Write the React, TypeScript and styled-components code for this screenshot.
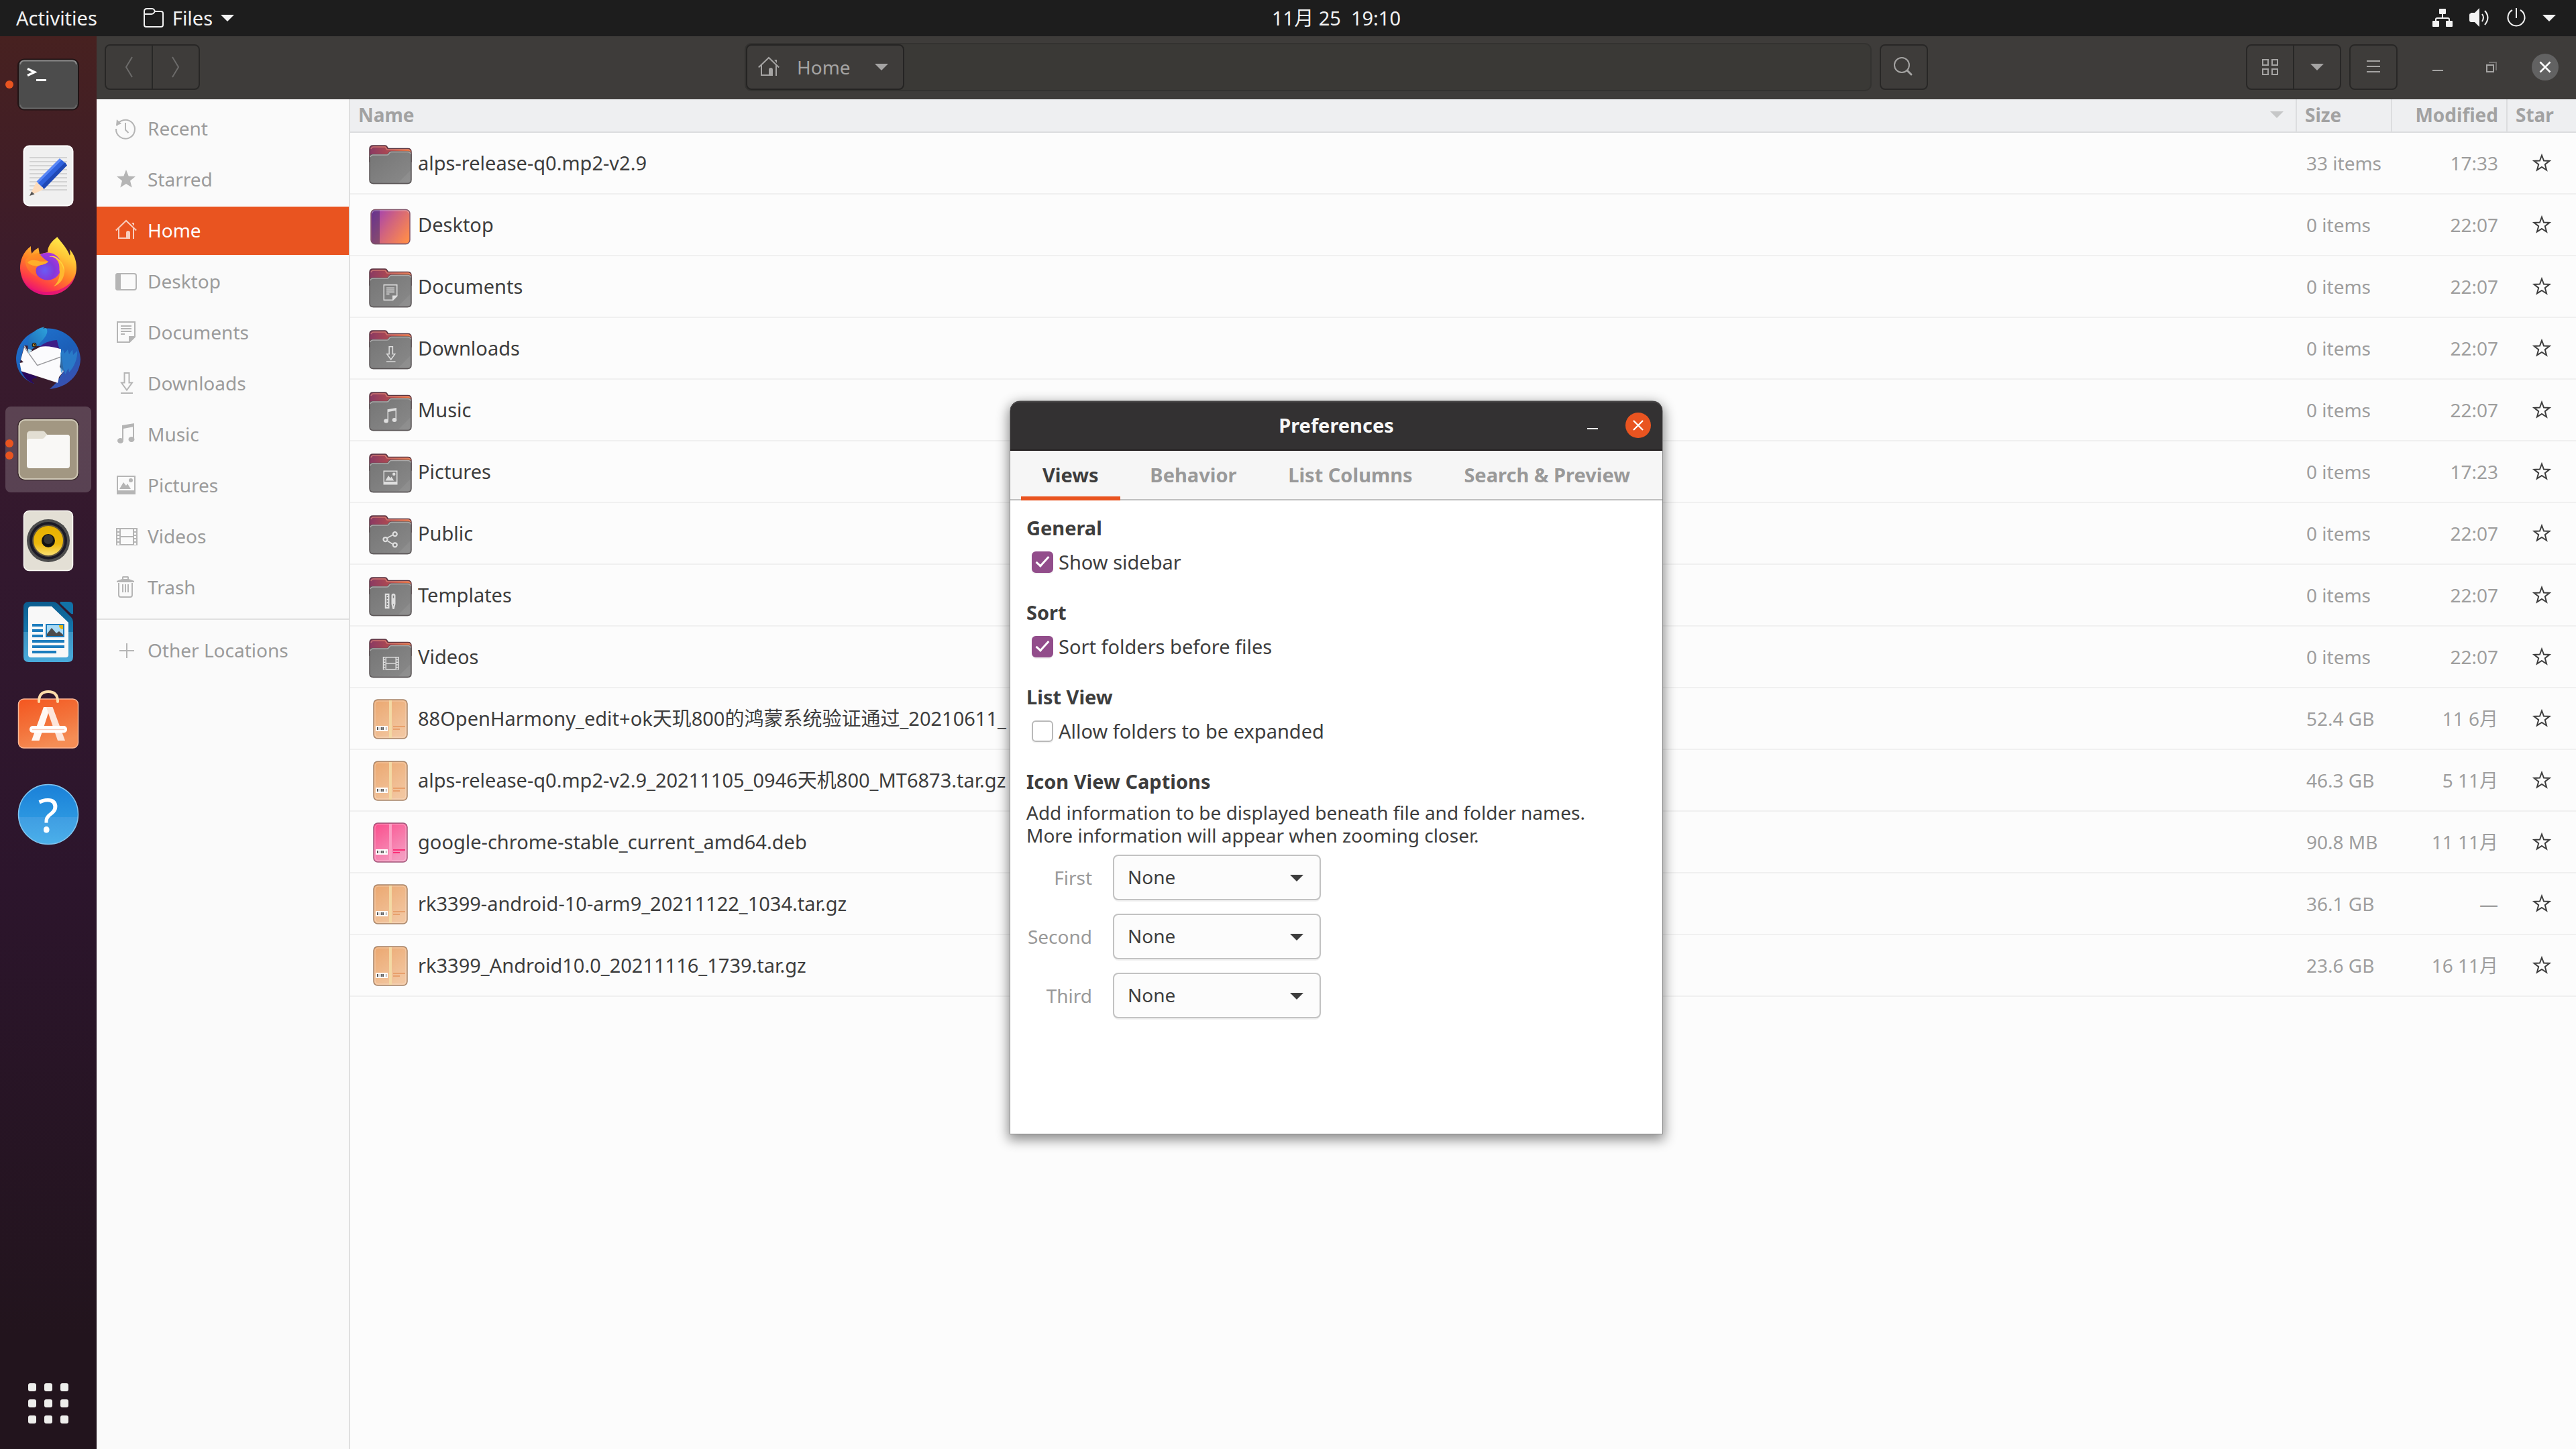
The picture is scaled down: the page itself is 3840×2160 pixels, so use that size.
import React, { useState } from 'react';
import styled, { createGlobalStyle, css } from 'styled-components';

const sans = '"Noto Sans", "Noto Sans CJK SC", sans-serif';

const GlobalStyle = createGlobalStyle`
  *, *::before, *::after { box-sizing: border-box; }
  html, body, #root { height: 100%; }
  body {
    margin: 0;
    overflow: hidden;
    background: #22141d;
    color: #3d3d3d;
    font-family: ${sans};
    font-size: 28px;
    line-height: 36px;
  }
  button, select, input { font: inherit; color: inherit; margin: 0; padding: 0; }
  button { background: none; border: 0; display: inline-flex; align-items: center; }
  svg { display: block; flex: none; overflow: visible; }
`;

/* ---------- symbolic icons, drawn on a 32 unit grid ---------- */

const glyphs: Record<string, React.ReactNode> = {
  recent: (
    <>
      <path d="M2 12.5A14 14 0 1 1 1 17" fill="none" stroke="currentColor" strokeWidth="2" />
      <path d="M2 3l7 6.5-8 2.5z" fill="currentColor" />
      <path d="M15 8v10.500l4.500 4.500" fill="none" stroke="currentColor" strokeWidth="2" />
    </>
  ),
  star: <path d="M16 2l3.700 9.500 10.300.5-8 6.500 2.700 10L16 23l-8.700 5.500 2.700-10-8-6.500 10.300-.5z" fill="currentColor" />,
  starOutline: (
    <path d="M16 4.500l3 8 8.500.4-6.700 5.300 2.300 8.300L16 22l-7.100 4.500 2.300-8.300-6.700-5.300 8.500-.4z" fill="none" stroke="currentColor" strokeWidth="2" />
  ),
  home: (
    <>
      <path d="M.8 16.500L16 2l15.200 14.500M5 13v15h15M27 13v16" fill="none" stroke="currentColor" strokeWidth="2" />
      <path d="M16 29V20q0-3 3-3t3 3v9zM24 5h4v5z" fill="currentColor" />
    </>
  ),
  desktop: (
    <>
      <rect x="1" y="5" width="30" height="24" rx="3" fill="none" stroke="currentColor" strokeWidth="2" />
      <path d="M4 4h4v26H4q-4 0-4-4V8q0-4 4-4z" fill="currentColor" />
    </>
  ),
  documents: (
    <>
      <path d="M3 1h26v22l-8 8H3z" fill="none" stroke="currentColor" strokeWidth="2" />
      <path d="M20 22h10L20 32zM8 6h16v2H8zM8 10h16v2H8zM8 14h16v2H8zM8 18h6v2H8z" fill="currentColor" />
    </>
  ),
  downloads: (
    <path d="M13.500 1h7v14.500h4.500L17 26.500 9 15.500h4.500zM8 31h18" fill="none" stroke="currentColor" strokeWidth="2" />
  ),
  music: (
    <>
      <path d="M10 3l18-3v5L12 8v17h-2zM26 4h2v20h-2z" fill="currentColor" />
      <ellipse cx="7.500" cy="26" rx="4.500" ry="4" fill="currentColor" />
      <ellipse cx="24" cy="24" rx="4.500" ry="4" fill="currentColor" />
    </>
  ),
  pictures: (
    <>
      <path d="M2 2h28v28H2zM4 4v20h24V4z" fill="currentColor" fillRule="evenodd" />
      <path d="M6 22l6-10 4 5 2-3 5 8z" fill="currentColor" />
      <circle cx="23" cy="9" r="3" fill="currentColor" />
    </>
  ),
  videos: (
    <>
      <path d="M7 5h20v24H7zM7 17h20" fill="none" stroke="currentColor" strokeWidth="2" />
      <path d="M2 4v26M32 4v26" fill="none" stroke="currentColor" strokeWidth="2" />
      <path d="M4 4v26M30 4v26" fill="none" stroke="currentColor" strokeWidth="4" strokeDasharray="2 3" />
    </>
  ),
  trash: (
    <>
      <path d="M5 10v18q0 3 3 3h14q3 0 3-3V10" fill="none" stroke="currentColor" strokeWidth="2" />
      <path d="M2 8V7l8-3V1.500Q10 0 11.500 0h7Q20 0 20 1.500V4l8 3v2H2zM12 4h6V2h-6zM10 12h2v12h-2zM14 12h2v12h-2zM18 12h2v12h-2z" fill="currentColor" fillRule="evenodd" />
    </>
  ),
  plus: <path d="M6 17h22M17 6v22" fill="none" stroke="currentColor" strokeWidth="2" />,
  share: (
    <>
      <path d="M10 13l13-7M10 19l13 8" fill="none" stroke="currentColor" strokeWidth="2.500" />
      <g fill="#7f7f7f" stroke="currentColor" strokeWidth="3">
        <circle cx="6" cy="16" r="4" />
        <circle cx="25" cy="5.500" r="4" />
        <circle cx="25" cy="27" r="4" />
      </g>
    </>
  ),
  templates: (
    <>
      <path d="M5 1h9v30H5zM8 4v24h3v-2H9v-2h2v-4H9v-2h2v-4H9v-2h2V8H9V6h2V4z" fill="currentColor" fillRule="evenodd" />
      <path d="M18 5q0-4 4-4t4 4v17l-2.500 10h-3L18 22zM21 5v5h2V5zM21 22l1 4 1-4z" fill="currentColor" fillRule="evenodd" />
    </>
  ),
  folder: (
    <path d="M2 10V6q0-4 4-4h8q2 0 3 2l1 2h9q3 0 3 3v17q0 3-3 3H5q-3 0-3-3V10h11q2 0 3.500-2L18 6" fill="none" stroke="currentColor" strokeWidth="2" />
  ),
  search: (
    <>
      <circle cx="13" cy="13" r="11" fill="none" stroke="currentColor" strokeWidth="2" />
      <path d="M21 21l6 6" stroke="currentColor" strokeWidth="3" strokeLinecap="round" />
    </>
  ),
  grid: <path d="M5 5h8v8H5zM19 5h8v8h-8zM5 19h8v8H5zM19 19h8v8h-8z" fill="none" stroke="currentColor" strokeWidth="2" />,
  menu: <path d="M6 7h20M6 15h20M6 23h20" stroke="currentColor" strokeWidth="2" />,
  back: <path d="M21 1L12 16l9 15" fill="none" stroke="currentColor" strokeWidth="2" />,
  forward: <path d="M11 1l9 15-9 15" fill="none" stroke="currentColor" strokeWidth="2" />,
  minimize: <path d="M8 21h16" stroke="currentColor" strokeWidth="2" />,
  restore: (
    <>
      <path d="M9 13h10v10H9z" fill="none" stroke="currentColor" strokeWidth="2" />
      <path d="M12 9h11v12" fill="none" stroke="currentColor" strokeWidth="2" opacity=".5" />
    </>
  ),
  close: <path d="M8.500 8.500l15 15M23.500 8.500l-15 15" stroke="currentColor" strokeWidth="2.500" />,
  network: (
    <>
      <path d="M12 2h8q1 0 1 1v6q0 1-1 1h-8q-1 0-1-1V3q0-1 1-1zM2 20h8q1 0 1 1v7q0 1-1 1H2q-1 0-1-1v-7q0-1 1-1zM22 20h8q1 0 1 1v7q0 1-1 1h-8q-1 0-1-1v-7q0-1 1-1z" fill="currentColor" />
      <path d="M16 9v7M6 21v-3q0-2 2-2h16q2 0 2 2v3" fill="none" stroke="currentColor" strokeWidth="2" />
    </>
  ),
  volume: (
    <>
      <path d="M3 9q0-1 1-1h5l7-7v28l-7-7H4q-3 0-3-3v-8q0-2 2-2z" fill="currentColor" />
      <path d="M20 10q4 5 0 11M24 5q9 10 0 21" fill="none" stroke="currentColor" strokeWidth="2" />
    </>
  ),
  power: <path d="M16 1v15M10 4a12.500 12.500 0 1 0 12 0" fill="none" stroke="currentColor" strokeWidth="2" />,
};

const Glyph = ({ name, size = 32 }: { name: string; size?: number }) => (
  <svg width={size} height={size} viewBox="0 0 32 32" aria-hidden="true">
    {glyphs[name]}
  </svg>
);

const Caret = () => (
  <svg width="20" height="10" viewBox="0 0 20 10" aria-hidden="true">
    <path d="M0 0h20L10 10z" fill="currentColor" />
  </svg>
);

/* ---------- full colour file icons, 64 unit grid ---------- */

const FolderIcon = ({ emblem }: { emblem?: string }) => (
  <svg width="64" height="64" viewBox="0 0 64 64" aria-hidden="true">
    <defs>
      <linearGradient id="folder-back" x1="0" x2="1">
        <stop offset="0" stopColor="#8a3a63" />
        <stop offset=".5" stopColor="#b04a50" />
        <stop offset="1" stopColor="#f0783c" />
      </linearGradient>
      <linearGradient id="folder-front" x1="0" y1="0" x2="1" y2="1">
        <stop offset="0" stopColor="#757575" />
        <stop offset="1" stopColor="#8a8a8a" />
      </linearGradient>
    </defs>
    <rect x="1" y="14" width="62" height="50" rx="6" fill="#000" opacity=".15" />
    <path d="M1 30V11q0-5 5-5h18q2 0 3 2l1.500 2.500H58q5 0 5 5V30z" fill="url(#folder-back)" stroke="#5a3540" strokeWidth="1.500" />
    <path d="M3 11q1-3 4-3h17l3 4h31q3 0 4 3" fill="none" stroke="#e08a78" strokeWidth="1.500" opacity=".7" />
    <path d="M1 24q0-4.500 4.500-4.500H26q2 0 3-1.500l1-1.500q1-1.500 3-1.500h25q5 0 5 5v37q0 5.500-5.500 5.500H6.500Q1 62.500 1 57z" fill="url(#folder-front)" stroke="#5b5657" strokeWidth="1.500" />
    <path d="M2 23q1-3 4-3h20.500q2 0 3-1.500l1-1.500q1-1.500 3-1.500H58q3.500 0 4 3" fill="none" stroke="#aaaaaa" strokeWidth="1.500" />
    <path d="M62 43L44 61h13q5 0 5-5z" fill="#fff" opacity=".06" />
    {emblem && (
      <svg x="20" y="29" width="24" height="24" viewBox="0 0 32 32" color="#dedede">
        {glyphs[emblem]}
      </svg>
    )}
  </svg>
);

const DesktopIcon = () => (
  <svg width="64" height="64" viewBox="0 0 64 64" aria-hidden="true">
    <defs>
      <linearGradient id="desk" x1="0" y1=".2" x2="1" y2=".8">
        <stop offset="0" stopColor="#a03fb4" />
        <stop offset=".45" stopColor="#d0637f" />
        <stop offset="1" stopColor="#ff8c4a" />
      </linearGradient>
    </defs>
    <rect x="3" y="11" width="58" height="51" rx="6" fill="#000" opacity=".15" />
    <rect x="3" y="9.500" width="58" height="51" rx="6" fill="url(#desk)" stroke="#84566b" strokeWidth="1.500" />
    <path d="M9 10h7v50H9q-5 0-5-5V15q0-5 5-5z" fill="#2b2b5e" opacity=".45" />
    <path d="M5 15q0-4 4-4h46q4 0 4 4" fill="none" stroke="#fff" strokeWidth="1.500" opacity=".3" />
  </svg>
);

const PackageIcon = ({ pink = false }: { pink?: boolean }) => {
  const id = pink ? 'pack-pink' : 'pack-tan';
  return (
    <svg width="64" height="64" viewBox="0 0 64 64" aria-hidden="true">
      <defs>
        <linearGradient id={id} x1="0" y1="0" x2=".6" y2="1">
          <stop offset="0" stopColor={pink ? '#fb4c8b' : '#eba76f'} />
          <stop offset="1" stopColor={pink ? '#f49ac0' : '#f2c6a0'} />
        </linearGradient>
      </defs>
      <rect x="7" y="4" width="50" height="58" rx="6" fill={`url(#${id})`} stroke={pink ? '#a0577a' : '#a5846a'} strokeWidth="1.500" />
      <rect x="9" y="6" width="46" height="54" rx="5" fill="none" stroke="#fff" strokeWidth="1" opacity=".35" />
      <rect x="30" y="5" width="4" height="56" fill={pink ? '#fba0c4' : '#f3d9a4'} />
      <rect x="10" y="43" width="18" height="8" fill="#fff" />
      <path d="M12 45h2v4h-2zM16 45h1v4h-1zM18 45h1v4h-1zM20 45h2v4h-2zM25 45h1v4h-1z" fill="#555" />
      <path d="M36 43h18v2H36zM36 47h10v2H36z" fill={pink ? '#fb2f77' : '#e8a06c'} />
    </svg>
  );
};

/* ---------- launcher icons, 96 unit grid ---------- */

const App96 = ({ children }: { children: React.ReactNode }) => (
  <svg width="96" height="96" viewBox="0 0 96 96" aria-hidden="true">
    {children}
  </svg>
);

const TerminalArt = () => (
  <App96>
    <rect x="3" y="10.500" width="90" height="75" rx="9" fill="#4c4c4c" stroke="#201314" strokeWidth="2" />
    <path d="M6 18q1-5.500 6-5.500h72q5 0 6 5.500" fill="none" stroke="#8a8a8a" strokeWidth="2" />
    <path d="M6 78q1 5.500 6 5.500h72q5 0 6-5.500" fill="none" stroke="#686868" strokeWidth="2" />
    <path d="M17 24.500l10.500 5L17 34.500" fill="none" stroke="#fff" strokeWidth="3.500" />
    <path d="M30 41.500h15" stroke="#fff" strokeWidth="3" />
  </App96>
);

const EditorArt = () => (
  <App96>
    <rect x="11.500" y="3.500" width="73" height="89" rx="8" fill="#f0f0f0" stroke="#fff" strokeWidth="2" />
    <path d="M20 21h56M20 27h56M20 33h56M20 39h56M20 45h56M20 51h56M20 57h56M20 63h56M20 69h56" stroke="#d3d3d3" strokeWidth="2" />
    <path d="M20 78l10.500-21.500L41.500 68z" fill="#fddcbc" />
    <path d="M20 78l3.200-6.500 4.300 4z" fill="#555" />
    <path d="M30.500 56.500L65 22l5.500 5L36 62z" fill="#5a88f7" />
    <path d="M33 59l35-34.500 5.500 5L39 65z" fill="#2f62de" />
    <path d="M38 63l35-35 3 4.500L41.500 68z" fill="#1f48b5" />
  </App96>
);

const FirefoxArt = () => (
  <App96>
    <defs>
      <linearGradient id="fx-body" x1=".8" y1="0" x2=".3" y2="1">
        <stop offset="0" stopColor="#fff44f" />
        <stop offset=".3" stopColor="#ffc235" />
        <stop offset=".55" stopColor="#ff8426" />
        <stop offset=".8" stopColor="#ff3f45" />
        <stop offset="1" stopColor="#e5097f" />
      </linearGradient>
      <radialGradient id="fx-globe" cx=".4" cy=".65" r=".7">
        <stop offset="0" stopColor="#6a5cf5" />
        <stop offset=".5" stopColor="#8438d8" />
        <stop offset="1" stopColor="#b335e0" />
      </radialGradient>
      <linearGradient id="fx-head" x1="0" y1="0" x2=".2" y2="1">
        <stop offset="0" stopColor="#ff9a1f" />
        <stop offset="1" stopColor="#ff5f35" />
      </linearGradient>
    </defs>
    <path d="M22 17C10 26 6 38 6 50c1 24 20 40 42 40 24 0 42-19 42-41 0-11-4-21-10.500-27.500C81 26 81 29 80 31 76 20 68 12 61.300 3.300 54 9 47 16 47 26L35 29l-1.700-9.700C29 22 25.500 24.500 23.500 28 22 25 22 21 22 17z" fill="url(#fx-body)" />
    <path d="M7 58c4 18 20 28 40 27 20 0 38-12 42-28-3 19-20 33-41 33C27 90 10 77 7 58z" fill="#e0107a" opacity=".8" />
    <circle cx="47" cy="47" r="20.500" fill="url(#fx-globe)" />
    <path d="M57 34c10 2 15 10 15 20s-6 20-16 23c8-7 10-17 8.500-25C65 44 63 38 57 34z" fill="#ffb730" />
    <path d="M57 34c-4-2-6-1-8-1 4-2 10-2 14 3 6 5 10 12 9 22-1-10-6-20-15-24z" fill="#ffd43c" />
    <path d="M33 27c5 5 10 11 15 12.500-4 5-11 5-15 7-5 3-4 9-1 16C20 58 13 48 14 38c3-5 11-9 19-11z" fill="url(#fx-head)" />
    <path d="M17 41c5-5 13-3 18-1.500 5 1 9-1 13 .5-4 5-11 4-16 7-5-1-11-1-15-6z" fill="#ffae2b" />
  </App96>
);

const ThunderbirdArt = () => (
  <App96>
    <defs>
      <linearGradient id="tb-body" x1=".2" y1="0" x2=".8" y2="1">
        <stop offset="0" stopColor="#1f73cf" />
        <stop offset=".5" stopColor="#1c5fb8" />
        <stop offset="1" stopColor="#3c4fb0" />
      </linearGradient>
      <linearGradient id="tb-head" x1="1" y1="0" x2="0" y2="1">
        <stop offset="0" stopColor="#2da3dc" />
        <stop offset="1" stopColor="#1d63b4" />
      </linearGradient>
    </defs>
    <path d="M27 86C10 80 0 66 0 48 1 25 20 4 48 3.500c27 1 47 21 48 46-1 24-19 42-46 44.500l9-8.500L71 67 66 34 36 30 12 29 6 54l2 14z" fill="url(#tb-body)" />
    <path d="M8 67l22 8 1 3-5 0-3 3 4 5C18 83 11 76 8 67z" fill="#2a0a5c" />
    <path d="M34 32c8-8 20-11 27-11 1 6 3 12 5 16-10-4-22-6-32-5z" fill="#3d1d86" />
    <path d="M12.700 29L7 50l4 4-5.500 1 2.200 12.300L62 84.700 64 76l7-9-6-6 2-9 0-17.500C56 31 45 29 36 31l-17 9z" fill="#fbfbfd" />
    <path d="M12 31l19.700 27.700L66 46.300" fill="none" stroke="#9a9a9e" strokeWidth="1.500" />
    <path d="M66 40l4-5 2 6 5-6 2 7 5-7 1 8 6-6c1 10-4 24-12 32l-1-6-5 9-1-7-5 5-1-9z" fill="#2b86cd" opacity=".75" />
    <path d="M18 40.500c-1-10-1-18 2-24C25 8 33 3 43 1l-3 2.500 5-.5c5 8-5 17-10 23-3 5-11 6-17 14.500z" fill="url(#tb-head)" />
    <path d="M18 34l6 2-5.500 5.500z" fill="#b9dfee" />
    <circle cx="27" cy="28.300" r="3.500" fill="#222" />
    <circle cx="27" cy="28.300" r="2" fill="#d09a2b" />
    <circle cx="27.500" cy="28" r="1" fill="#111" />
  </App96>
);

const FilesArt = () => (
  <App96>
    <rect x="3" y="2.500" width="90" height="91" rx="10" fill="#a29782" stroke="#3a2a2e" strokeWidth="1.500" />
    <rect x="4.500" y="4" width="87" height="88" rx="9" fill="none" stroke="#cfc8b6" strokeWidth="2" />
    <path d="M16 26q0-5.500 5.500-5.500h18q2 0 3 1l4 4.500H76q4 0 4 4v12H16z" fill="#e2ded3" />
    <path d="M16 36q0-4 4-4h19q2 0 3.500-2l1.500-2q1.500-2 3.500-2H76q4 0 4 4v42q0 4-4 4H20q-4 0-4-4z" fill="#f9f8f6" />
  </App96>
);

const RhythmboxArt = () => (
  <App96>
    <defs>
      <linearGradient id="rb" x1="0" y1="0" x2="0" y2="1">
        <stop offset="0" stopColor="#e6b000" />
        <stop offset=".6" stopColor="#ecb80c" />
        <stop offset="1" stopColor="#fbe070" />
      </linearGradient>
    </defs>
    <rect x="11.500" y="3.500" width="73" height="89" rx="8" fill="#e3dfd5" stroke="#fbfaf6" strokeWidth="1.500" />
    <circle cx="48" cy="48" r="32" fill="#4d4d4d" />
    <circle cx="48" cy="48" r="28" fill="#1b1a26" />
    <circle cx="48" cy="48" r="24" fill="#5c5340" />
    <circle cx="48" cy="48" r="22" fill="url(#rb)" />
    <circle cx="48" cy="48" r="10" fill="#111" />
    <circle cx="48" cy="46" r="7" fill="#333" />
  </App96>
);

const WriterArt = () => (
  <App96>
    <defs>
      <linearGradient id="wr" x1="0" y1="0" x2="0" y2="1">
        <stop offset="0" stopColor="#0b5c8e" />
        <stop offset=".5" stopColor="#1677ad" />
        <stop offset=".5" stopColor="#3c93c2" />
        <stop offset="1" stopColor="#4aabdb" />
      </linearGradient>
    </defs>
    <path d="M19 3h36q4 0 7 3l20 20q3 3 3 7v52q0 8-8 8H19q-8 0-8-8V11q0-8 8-8z" fill="url(#wr)" />
    <path d="M66 3h13q6 0 6 6v12q-2 1-4-1L66 6q-1-2 0-3z" fill="#1272a8" />
    <path d="M22 10h31l25 24v48q0 4-4 4H22q-4 0-4-4V14q0-4 4-4z" fill="#f8f8f8" />
    <path d="M24 38h16M24 46h16M24 54h16M24 62h48M24 70h48M24 78h36" stroke="#1b7cbd" strokeWidth="4" />
    <rect x="44" y="36" width="28" height="20" fill="#1b7cbd" />
    <rect x="46" y="38" width="24" height="16" fill="#a8daf5" />
    <path d="M46 54v-3l7-9 7 8 4-3 6 5v2z" fill="#4c4c4c" />
    <path d="M64 38h6v6q-6 0-6-6z" fill="#e8b714" />
  </App96>
);

const SoftwareArt = () => (
  <App96>
    <defs>
      <linearGradient id="sw" x1="0" y1="0" x2=".4" y2="1">
        <stop offset="0" stopColor="#f4561f" />
        <stop offset=".6" stopColor="#f3743c" />
        <stop offset="1" stopColor="#f58d55" />
      </linearGradient>
    </defs>
    <rect x="3.500" y="12" width="89" height="73" rx="8" fill="url(#sw)" stroke="#fbb795" strokeWidth="1.500" />
    <path d="M34 16v-2q1-13 14-13t14 13v2" fill="none" stroke="#fddcaa" strokeWidth="4" strokeLinecap="round" />
    <path d="M41 24h10L34.500 74H23z" fill="#fff8f4" />
    <path d="M45 24h9.500L73 74H62L48 33z" fill="#fde5da" />
    <rect x="20" y="52" width="56" height="10.500" rx="5" fill="#fff" />
    <path d="M24 57.500h48" stroke="#f9cdbd" strokeWidth="1.500" />
  </App96>
);

const HelpArt = () => (
  <App96>
    <defs>
      <linearGradient id="hp" x1="0" y1="0" x2="0" y2="1">
        <stop offset="0" stopColor="#1a80d8" />
        <stop offset=".54" stopColor="#2b96e0" />
        <stop offset=".54" stopColor="#3f9de2" />
        <stop offset="1" stopColor="#4bb0ea" />
      </linearGradient>
    </defs>
    <circle cx="48" cy="48" r="44.500" fill="url(#hp)" stroke="#7fc4f0" strokeWidth="1.500" />
    <text x="48" y="75" textAnchor="middle" fontFamily="Noto Sans, sans-serif" fontSize="70" fill="#fff">?</text>
  </App96>
);

/* ---------- top bar ---------- */

const Desktop = styled.div`
  display: flex;
  flex-direction: column;
  height: 100vh;
`;

const TopBar = styled.header`
  display: flex;
  flex: none;
  align-items: center;
  height: 54px;
  background: #1d1d1d;
  color: #f2f2f2;
  font-size: 29px;
`;

const TopStart = styled.div`
  display: flex;
  flex: 1 1 144px;
  gap: 68px;
`;

const TopEnd = styled.div`
  display: flex;
  flex: 1 1 0;
  justify-content: flex-end;
`;

const ActivitiesButton = styled.button`
  margin-left: 24px;
`;

const AppMenuButton = styled.button`
  gap: 12px;
`;

const Clock = styled.button`
  white-space: pre;
`;

const StatusButton = styled.button`
  gap: 23px;
  margin-right: 30px;
`;

/* ---------- launcher ---------- */

const Workspace = styled.div`
  display: flex;
  flex: 1;
  min-height: 0;
`;

const Dock = styled.nav`
  display: flex;
  flex: none;
  flex-direction: column;
  gap: 8px;
  width: 144px;
  padding: 8px 8px 4px;
  background: linear-gradient(#472120, #3b1b2c 18%, #32182e 38%, #2c152c 60%, #22141d 92%);
`;

const DockButton = styled.button<{ $active?: boolean; $last?: boolean }>`
  position: relative;
  justify-content: center;
  height: 128px;
  border-radius: 8px;
  ${(p) => p.$active && css`background: rgba(255, 255, 255, 0.18);`}
  ${(p) => p.$last && css`margin-top: auto;`}
`;

const Dots = styled.span`
  position: absolute;
  left: 0;
  top: 0;
  bottom: 0;
  display: flex;
  flex-direction: column;
  justify-content: center;
  gap: 6px;
`;

const Dot = styled.span`
  width: 12px;
  height: 12px;
  border-radius: 50%;
  background: #e95420;
`;

const AppGrid = styled.span`
  display: grid;
  grid-template-columns: repeat(3, 12px);
  gap: 12px;
`;

const AppGridCell = styled.span`
  height: 12px;
  border-radius: 3px;
  background: #eeeeec;
`;

/* ---------- file window ---------- */

const FileWindow = styled.main`
  position: relative;
  display: flex;
  flex: 1;
  flex-direction: column;
  min-width: 0;
  background: #fcfcfc;
`;

const HeaderBar = styled.div`
  display: grid;
  flex: none;
  grid-template-columns: minmax(0, 1fr) minmax(0, 1764px) minmax(0, 1fr);
  align-items: center;
  height: 94px;
  padding-bottom: 2px;
  background: #3e3c3a;
  color: #a5a4a3;
`;

const ButtonGroup = styled.div`
  display: flex;
  height: 68px;
  border: 2px solid #282726;
  border-radius: 8px;
`;

const GroupButton = styled.button`
  justify-content: center;
  width: 68px;
  & + & {
    width: 70px;
    border-left: 2px solid #282726;
  }
`;

const NavArea = styled.div`
  display: flex;
  padding-left: 12px;
  color: #6c6b6a;
`;

const PathArea = styled.div`
  display: flex;
  align-items: center;
  gap: 12px;
`;

const PathBar = styled.div`
  display: flex;
  flex: 1;
  align-items: center;
  height: 72px;
  border: 2px solid #333230;
  border-radius: 10px;
  background: #3a3936;
`;

const PathButton = styled.button`
  gap: 26px;
  height: 68px;
  padding: 0 22px 0 16px;
  border: 2px solid #252423;
  border-radius: 8px;
  background: #3e3c3a;
`;

const PathLabel = styled.span`
  margin-right: 10px;
`;

const ToolArea = styled.div`
  display: flex;
  align-items: center;
  justify-content: flex-end;
  gap: 12px;
  padding-right: 6px;
`;

const WindowButtons = styled.div`
  display: flex;
  margin-left: 8px;
`;

const WindowButton = styled.button`
  justify-content: center;
  width: 80px;
  height: 68px;
`;

const CloseDisc = styled.span<{ $accent?: boolean }>`
  display: flex;
  align-items: center;
  justify-content: center;
  width: ${(p) => (p.$accent ? 38 : 40)}px;
  height: ${(p) => (p.$accent ? 38 : 40)}px;
  border-radius: 50%;
  background: ${(p) => (p.$accent ? '#e95420' : '#626262')};
  color: #fff;
`;

const Body = styled.div`
  display: flex;
  flex: 1;
  min-height: 0;
`;

const Sidebar = styled.nav`
  display: flex;
  flex: none;
  flex-direction: column;
  gap: 4px;
  width: 378px;
  padding-top: 8px;
  border-right: 2px solid #dfdfdf;
  background: #fafafa;
`;

const Place = styled.a<{ $current?: boolean }>`
  display: flex;
  align-items: center;
  gap: 16px;
  height: 72px;
  padding: 0 0 2px 28px;
  text-decoration: none;
  color: ${(p) => (p.$current ? '#ffffff' : '#9b9b9b')};
  background: ${(p) => (p.$current ? '#e95420' : 'transparent')};
  svg { color: ${(p) => (p.$current ? '#f8cdbd' : '#b5b5b5')}; }
`;

const Divider = styled.hr`
  width: 100%;
  height: 2px;
  margin: 6px 0;
  border: 0;
  background: #e0e0e0;
`;

const Listing = styled.div`
  flex: 1;
  min-width: 0;
  overflow: hidden;
`;

const FileTable = styled.table`
  width: 100%;
  table-layout: fixed;
  border-spacing: 0;
`;

const Column = styled.col<{ $width?: number }>`
  ${(p) => p.$width && css`width: ${p.$width}px;`}
`;

const HeadCell = styled.th<{ $align?: string }>`
  height: 50px;
  padding: 0 12px 2px;
  border-bottom: 2px solid #dcdddf;
  border-right: 2px solid #dcdddf;
  background: #eeeff1;
  color: #a2a2a2;
  font-weight: 700;
  text-align: ${(p) => p.$align || 'left'};
  &:last-child { border-right: 0; }
`;

const SortHead = styled.button`
  justify-content: space-between;
  width: 100%;
  padding-right: 6px;
  font-weight: 700;
  svg { color: #c6c7c8; }
`;

const Cell = styled.td<{ $align?: string }>`
  height: 92px;
  padding: 0 14px;
  border-bottom: 2px solid #f0f0f0;
  color: #9e9e9e;
  text-align: ${(p) => p.$align || 'left'};
  white-space: nowrap;
`;

const FileName = styled.div`
  display: flex;
  align-items: center;
  gap: 9px;
  padding-left: 14px;
  color: #3d3d3d;
  font-size: 29px;
`;

const StarButton = styled.button`
  display: flex;
  margin: 0 auto;
  color: #3d3d3d;
`;

/* ---------- preferences dialog ---------- */

const DialogLayer = styled.div`
  position: absolute;
  inset: 0;
  display: flex;
  align-items: flex-start;
  justify-content: center;
  padding-top: 543px;
`;

const Dialog = styled.section`
  width: 974px;
  border: 1px solid #8c8c8c;
  border-radius: 16px 16px 0 0;
  background: #fff;
  box-shadow: 0 6px 18px 2px rgba(0, 0, 0, 0.45);
  font-size: 29px;
`;

const DialogTitleBar = styled.div`
  display: grid;
  grid-template-columns: 1fr auto 1fr;
  align-items: center;
  height: 74px;
  border-bottom: 2px solid #241f21;
  border-radius: 14px 14px 0 0;
  background: #333132;
  box-shadow: inset 0 2px #454344;
  color: #f7f7f7;
`;

const DialogTitle = styled.h1`
  grid-column: 2;
  margin: 0;
  font-size: 29px;
  font-weight: 700;
`;

const DialogControls = styled.div`
  display: flex;
  justify-content: flex-end;
  gap: 30px;
  padding-right: 17px;
`;

const DialogControl = styled.button`
  justify-content: center;
  width: 38px;
  height: 38px;
`;

const Tabs = styled.div`
  display: flex;
  justify-content: space-between;
  height: 74px;
  padding: 0 16px;
  background: #f6f6f6;
  box-shadow: inset 0 -2px #bfbfbf;
`;

const Tab = styled.button<{ $selected: boolean }>`
  padding: 0 32px 3px;
  font-size: 29px;
  font-weight: 700;
  color: ${(p) => (p.$selected ? '#3d3d3d' : '#999999')};
  ${(p) => p.$selected && css`box-shadow: inset 0 -6px #e95420;`}
`;

const Panel = styled.div`
  display: flex;
  flex-direction: column;
  gap: 36px;
  min-height: 944px;
  padding: 24px;
`;

const Heading = styled.h2`
  margin: 0 0 12px;
  font-size: 29px;
  font-weight: 700;
  line-height: 34px;
`;

const CheckRow = styled.label`
  display: flex;
  align-items: center;
  gap: 8px;
  height: 44px;
  padding-left: 8px;
`;

const Check = styled.input`
  appearance: none;
  display: grid;
  place-content: center;
  width: 32px;
  height: 32px;
  border: 2px solid #b9b9b9;
  border-radius: 6px;
  background: #fff;
  box-shadow: 0 2px rgba(0, 0, 0, 0.05);
  &:checked {
    border-color: #924d8b;
    background: #924d8b;
  }
  &:checked::after {
    content: '';
    width: 10px;
    height: 20px;
    margin-bottom: 6px;
    border: solid #fff;
    border-width: 0 3px 3px 0;
    transform: rotate(42deg);
  }
`;

const Note = styled.p`
  margin: 0 0 12px;
  font-size: 28px;
  line-height: 34px;
`;

const CaptionGrid = styled.div`
  display: grid;
  grid-template-columns: 98px 310px;
  gap: 20px 31px;
  align-items: center;
`;

const CaptionLabel = styled.label`
  color: #999999;
  text-align: right;
  white-space: nowrap;
  font-size: 28px;
`;

const SelectBox = styled.div`
  position: relative;
  svg {
    position: absolute;
    right: 26px;
    top: 30px;
    pointer-events: none;
  }
`;

const Select = styled.select`
  appearance: none;
  display: block;
  width: 100%;
  height: 68px;
  padding: 0 60px 2px 20px;
  border: 2px solid #c2c2c2;
  border-radius: 8px;
  background: #fcfcfc;
  box-shadow: 0 2px rgba(0, 0, 0, 0.05);
  font-size: 28px;
`;

/* ---------- data ---------- */

const launchers = [
  { label: 'Terminal', art: <TerminalArt />, windows: 1 },
  { label: 'Text Editor', art: <EditorArt />, windows: 0 },
  { label: 'Firefox', art: <FirefoxArt />, windows: 0 },
  { label: 'Thunderbird', art: <ThunderbirdArt />, windows: 0 },
  { label: 'Files', art: <FilesArt />, windows: 2, active: true },
  { label: 'Rhythmbox', art: <RhythmboxArt />, windows: 0 },
  { label: 'LibreOffice Writer', art: <WriterArt />, windows: 0 },
  { label: 'Ubuntu Software', art: <SoftwareArt />, windows: 0 },
  { label: 'Help', art: <HelpArt />, windows: 0 },
];

const places = [
  ['Recent', 'recent'],
  ['Starred', 'star'],
  ['Home', 'home'],
  ['Desktop', 'desktop'],
  ['Documents', 'documents'],
  ['Downloads', 'downloads'],
  ['Music', 'music'],
  ['Pictures', 'pictures'],
  ['Videos', 'videos'],
  ['Trash', 'trash'],
];

const files = [
  { name: 'alps-release-q0.mp2-v2.9', size: '33 items', modified: '17:33', icon: <FolderIcon /> },
  { name: 'Desktop', size: '0 items', modified: '22:07', icon: <DesktopIcon /> },
  { name: 'Documents', size: '0 items', modified: '22:07', icon: <FolderIcon emblem="documents" /> },
  { name: 'Downloads', size: '0 items', modified: '22:07', icon: <FolderIcon emblem="downloads" /> },
  { name: 'Music', size: '0 items', modified: '22:07', icon: <FolderIcon emblem="music" /> },
  { name: 'Pictures', size: '0 items', modified: '17:23', icon: <FolderIcon emblem="pictures" /> },
  { name: 'Public', size: '0 items', modified: '22:07', icon: <FolderIcon emblem="share" /> },
  { name: 'Templates', size: '0 items', modified: '22:07', icon: <FolderIcon emblem="templates" /> },
  { name: 'Videos', size: '0 items', modified: '22:07', icon: <FolderIcon emblem="videos" /> },
  { name: '88OpenHarmony_edit+ok天玑800的鸿蒙系统验证通过_20210611_', size: '52.4 GB', modified: '11 6月', icon: <PackageIcon /> },
  { name: 'alps-release-q0.mp2-v2.9_20211105_0946天机800_MT6873.tar.gz', size: '46.3 GB', modified: '5 11月', icon: <PackageIcon /> },
  { name: 'google-chrome-stable_current_amd64.deb', size: '90.8 MB', modified: '11 11月', icon: <PackageIcon pink /> },
  { name: 'rk3399-android-10-arm9_20211122_1034.tar.gz', size: '36.1 GB', modified: '—', icon: <PackageIcon /> },
  { name: 'rk3399_Android10.0_20211116_1739.tar.gz', size: '23.6 GB', modified: '16 11月', icon: <PackageIcon /> },
];

const tabs = ['Views', 'Behavior', 'List Columns', 'Search & Preview'];

const checks = [
  { heading: 'General', label: 'Show sidebar', on: true },
  { heading: 'Sort', label: 'Sort folders before files', on: true },
  { heading: 'List View', label: 'Allow folders to be expanded', on: false },
];

/* ---------- views ---------- */

const Launcher = () => (
  <Dock aria-label="Dock">
    {launchers.map((app) => (
      <DockButton key={app.label} $active={app.active} aria-label={app.label}>
        {app.windows > 0 && (
          <Dots>
            {Array.from({ length: app.windows }, (_, i) => (
              <Dot key={i} />
            ))}
          </Dots>
        )}
        {app.art}
      </DockButton>
    ))}
    <DockButton $last aria-label="Show Applications">
      <AppGrid>
        {Array.from({ length: 9 }, (_, i) => (
          <AppGridCell key={i} />
        ))}
      </AppGrid>
    </DockButton>
  </Dock>
);

const WindowHeader = () => (
  <HeaderBar>
    <NavArea>
      <ButtonGroup>
        <GroupButton aria-label="Back"><Glyph name="back" /></GroupButton>
        <GroupButton aria-label="Forward"><Glyph name="forward" /></GroupButton>
      </ButtonGroup>
    </NavArea>
    <PathArea>
      <PathBar>
        <PathButton>
          <Glyph name="home" />
          <PathLabel>Home</PathLabel>
          <Caret />
        </PathButton>
      </PathBar>
      <ButtonGroup>
        <GroupButton aria-label="Search"><Glyph name="search" /></GroupButton>
      </ButtonGroup>
    </PathArea>
    <ToolArea>
      <ButtonGroup>
        <GroupButton aria-label="Icon view"><Glyph name="grid" /></GroupButton>
        <GroupButton aria-label="View options"><Caret /></GroupButton>
      </ButtonGroup>
      <ButtonGroup>
        <GroupButton aria-label="Menu"><Glyph name="menu" /></GroupButton>
      </ButtonGroup>
      <WindowButtons>
        <WindowButton aria-label="Minimize"><Glyph name="minimize" /></WindowButton>
        <WindowButton aria-label="Restore"><Glyph name="restore" /></WindowButton>
        <WindowButton aria-label="Close">
          <CloseDisc><Glyph name="close" /></CloseDisc>
        </WindowButton>
      </WindowButtons>
    </ToolArea>
  </HeaderBar>
);

const FileList = () => (
  <Listing>
    <FileTable>
      <colgroup>
        <Column />
        <Column $width={142} />
        <Column $width={172} />
        <Column $width={102} />
      </colgroup>
      <thead>
        <tr>
          <HeadCell scope="col"><SortHead>Name <Caret /></SortHead></HeadCell>
          <HeadCell scope="col">Size</HeadCell>
          <HeadCell scope="col" $align="right">Modified</HeadCell>
          <HeadCell scope="col">Star</HeadCell>
        </tr>
      </thead>
      <tbody>
        {files.map((f) => (
          <tr key={f.name}>
            <Cell><FileName>{f.icon}{f.name}</FileName></Cell>
            <Cell>{f.size}</Cell>
            <Cell $align="right">{f.modified}</Cell>
            <Cell $align="center">
              <StarButton aria-label={`Star ${f.name}`}><Glyph name="starOutline" /></StarButton>
            </Cell>
          </tr>
        ))}
      </tbody>
    </FileTable>
  </Listing>
);

const Preferences = () => {
  const [tab, setTab] = useState(0);
  return (
    <DialogLayer>
      <Dialog role="dialog" aria-labelledby="prefs-title">
        <DialogTitleBar>
          <DialogTitle id="prefs-title">Preferences</DialogTitle>
          <DialogControls>
            <DialogControl aria-label="Minimize"><Glyph name="minimize" /></DialogControl>
            <DialogControl aria-label="Close">
              <CloseDisc $accent><Glyph name="close" size={30} /></CloseDisc>
            </DialogControl>
          </DialogControls>
        </DialogTitleBar>
        <Tabs role="tablist">
          {tabs.map((t, i) => (
            <Tab key={t} role="tab" aria-selected={tab === i} $selected={tab === i} onClick={() => setTab(i)}>
              {t}
            </Tab>
          ))}
        </Tabs>
        <Panel>
          {checks.map((c) => (
            <div key={c.heading}>
              <Heading>{c.heading}</Heading>
              <CheckRow>
                <Check type="checkbox" defaultChecked={c.on} />
                {c.label}
              </CheckRow>
            </div>
          ))}
          <div>
            <Heading>Icon View Captions</Heading>
            <Note>
              Add information to be displayed beneath file and folder names.
              <br />
              More information will appear when zooming closer.
            </Note>
            <CaptionGrid>
              {['First', 'Second', 'Third'].map((c) => (
                <React.Fragment key={c}>
                  <CaptionLabel htmlFor={`caption-${c}`}>{c}</CaptionLabel>
                  <SelectBox>
                    <Select id={`caption-${c}`} defaultValue="None">
                      <option>None</option>
                      <option>Size</option>
                      <option>Type</option>
                    </Select>
                    <Caret />
                  </SelectBox>
                </React.Fragment>
              ))}
            </CaptionGrid>
          </div>
        </Panel>
      </Dialog>
    </DialogLayer>
  );
};

export default function App() {
  return (
    <Desktop>
      <GlobalStyle />
      <TopBar>
        <TopStart>
          <ActivitiesButton>Activities</ActivitiesButton>
          <AppMenuButton>
            <Glyph name="folder" />
            Files
            <Caret />
          </AppMenuButton>
        </TopStart>
        <Clock>11月 25  19:10</Clock>
        <TopEnd>
          <StatusButton aria-label="System menu">
            <Glyph name="network" />
            <Glyph name="volume" />
            <Glyph name="power" />
            <Caret />
          </StatusButton>
        </TopEnd>
      </TopBar>
      <Workspace>
        <Launcher />
        <FileWindow>
          <WindowHeader />
          <Body>
            <Sidebar aria-label="Places">
              {places.map(([label, icon]) => (
                <Place key={label} href="#" $current={label === 'Home'}>
                  <Glyph name={icon} />
                  {label}
                </Place>
              ))}
              <Divider />
              <Place href="#">
                <Glyph name="plus" />
                Other Locations
              </Place>
            </Sidebar>
            <FileList />
          </Body>
          <Preferences />
        </FileWindow>
      </Workspace>
    </Desktop>
  );
}
